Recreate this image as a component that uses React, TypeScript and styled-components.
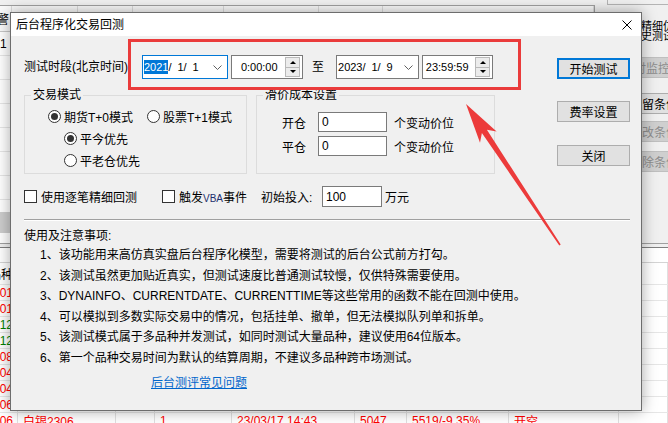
import React from 'react';
import styled, { createGlobalStyle } from 'styled-components';

const FONT = '"Liberation Sans", "Noto Sans CJK SC", sans-serif';

const GlobalStyle = createGlobalStyle`
  html, body {
    margin: 0;
    padding: 0;
    background: #f0f0f0;
  }
  body {
    font-family: ${FONT};
    font-size: 12px;
    color: #000;
  }
  * {
    box-sizing: border-box;
  }
`;

type Trade = {
  code: string;
  name?: string;
  qty?: string;
  time?: string;
  price?: string;
  last?: string;
  action?: string;
  color: string;
};

const RED = '#ff0000';
const GREEN = '#008000';

// rows that sit behind the dialog only show their code column
const trades: Trade[] = [
  { code: 'SH01', color: RED },
  { code: 'SC01', color: RED },
  { code: 'YC12', color: GREEN },
  { code: 'MC12', color: GREEN },
  { code: 'PA08', color: RED },
  { code: 'RU04', color: RED },
  { code: 'CU04', color: RED },
  { code: 'AG06', color: RED },
  { code: 'AG2306', name: '白银2306', qty: '1', time: '23/03/17 14:43', price: '5047', last: '5519/-9.35%', action: '开空', color: RED },
];

const notes = [
  '1、该功能用来高仿真实盘后台程序化模型，需要将测试的后台公式前方打勾。',
  '2、该测试虽然更加贴近真实，但测试速度比普通测试较慢，仅供特殊需要使用。',
  '3、DYNAINFO、CURRENTDATE、CURRENTTIME等这些常用的函数不能在回测中使用。',
  '4、可以模拟到多数实际交易中的情况，包括挂单、撤单，但无法模拟队列单和拆单。',
  '5、该测试模式属于多品种并发测试，如同时测试大量品种，建议使用64位版本。',
  '6、第一个品种交易时间为默认的结算周期，不建议多品种跨市场测试。',
];

const App: React.FC = () => {
  return (
    <>
      <GlobalStyle />
      <Screen>
        <Workspace>
          <TopSection>
            <TopTable>
              <TopRow $head>
                <TopCell $first $end>预警</TopCell>
                <TopCell />
                <TopCell />
                <TopCell />
                <TopCell />
                <TopCell />
                <TopCell />
              </TopRow>
              <TopBody>
                {Array.from({ length: 8 }).map((_, i) => (
                  <TopRow key={i}>
                    <TopCell $first>{i === 0 ? '1' : ''}</TopCell>
                    <TopCell />
                    <TopCell />
                    <TopCell />
                    <TopCell />
                    <TopCell />
                    <TopCell />
                  </TopRow>
                ))}
              </TopBody>
              <HScroll>
                <HThumb />
              </HScroll>
              <TopFooter />
            </TopTable>
            <SidePanel>
              <SideTopBox />
              <SideNote>逐笔精细仿真历史测试</SideNote>
              <SideButton $mt={16} disabled>
                实时监控(S)
              </SideButton>
              <SideButton $mt={15}>保留条件</SideButton>
              <SideButton $mt={7} disabled>
                修改条件
              </SideButton>
              <SideButton $mt={9} disabled>
                删除条件
              </SideButton>
            </SidePanel>
          </TopSection>
          <SplitBar />
          <BottomTable>
            <BottomStrip />
            <TradeRow $h={22}>
              <TradeCell $end>品种</TradeCell>
              <TradeCell />
              <TradeCell />
              <TradeCell />
              <TradeCell />
              <TradeCell />
              <TradeCell />
              <TradeCell />
              <TradeCell />
            </TradeRow>
            {trades.map((t, i) => (
              <TradeRow key={i} $h={16}>
                <TradeCell $end $color={t.color}>{t.code}</TradeCell>
                <TradeCell $color={t.color}>{t.name}</TradeCell>
                <TradeCell $color={t.color} />
                <TradeCell $color={t.color}>{t.qty}</TradeCell>
                <TradeCell $color={t.color}>{t.time}</TradeCell>
                <TradeCell $color={t.color}>{t.price}</TradeCell>
                <TradeCell $color={t.color}>{t.last}</TradeCell>
                <TradeCell $color={t.color}>{t.action}</TradeCell>
                <TradeCell />
              </TradeRow>
            ))}
          </BottomTable>
        </Workspace>

        <Dialog>
          <TitleBar>
            <Title>后台程序化交易回测</Title>
            <CloseButton>
              <svg width="10" height="10" viewBox="0 0 10 10">
                <path d="M0.5 0.5 L9.5 9.5 M9.5 0.5 L0.5 9.5" stroke="#000" strokeWidth="1" />
              </svg>
            </CloseButton>
          </TitleBar>
          <Body>
            <TopPart>
              <Main>
                <DateRow>
                  <RowLabel>测试时段(北京时间)</RowLabel>
                  <FieldBox $w={86} $focus>
                    <Selected>2021</Selected>/<DatePart>1</DatePart>/<DatePart>1</DatePart>
                    <Chevron width="9" height="5" viewBox="0 0 9 5">
                      <path d="M0.5 0.5 L4.5 4.5 L8.5 0.5" fill="none" stroke="#606060" strokeWidth="1" />
                    </Chevron>
                  </FieldBox>
                  <FieldBox $w={72}>
                    <HourPart>0</HourPart>:00:00
                    <Spinner>
                      <SpinHalf>
                        <Tri $up />
                      </SpinHalf>
                      <SpinHalf>
                        <Tri />
                      </SpinHalf>
                    </Spinner>
                  </FieldBox>
                  <ToLabel>至</ToLabel>
                  <FieldBox $w={83}>
                    2023/<DatePart>1</DatePart>/<DatePart>9</DatePart>
                    <Chevron width="9" height="5" viewBox="0 0 9 5">
                      <path d="M0.5 0.5 L4.5 4.5 L8.5 0.5" fill="none" stroke="#606060" strokeWidth="1" />
                    </Chevron>
                  </FieldBox>
                  <FieldBox $w={71}>
                    <HourPart>23</HourPart>:59:59
                    <Spinner>
                      <SpinHalf>
                        <Tri $up />
                      </SpinHalf>
                      <SpinHalf>
                        <Tri />
                      </SpinHalf>
                    </Spinner>
                  </FieldBox>
                </DateRow>

                <GroupRow>
                  <Group $w={223}>
                    <Legend>交易模式</Legend>
                    <GroupInner $pt={6} $pl={23}>
                      <RadioCol>
                        <RadioLine>
                          <RadioItem $w={99}>
                            <RadioDot $on />
                            期货T+0模式
                          </RadioItem>
                          <RadioItem>
                            <RadioDot />
                            股票T+1模式
                          </RadioItem>
                        </RadioLine>
                        <RadioLine $indent>
                          <RadioItem>
                            <RadioDot $on />
                            平今优先
                          </RadioItem>
                        </RadioLine>
                        <RadioLine $indent>
                          <RadioItem>
                            <RadioDot />
                            平老仓优先
                          </RadioItem>
                        </RadioLine>
                      </RadioCol>
                    </GroupInner>
                  </Group>
                  <Group $w={239}>
                    <Legend>滑价成本设置</Legend>
                    <GroupInner $pt={10} $pl={25}>
                      <CostCol>
                        <CostRow>
                          <CostLabel>开仓</CostLabel>
                          <InputBox $w={69} $h={20}>0</InputBox>
                          <span>个变动价位</span>
                        </CostRow>
                        <CostRow>
                          <CostLabel>平仓</CostLabel>
                          <InputBox $w={69} $h={20}>0</InputBox>
                          <span>个变动价位</span>
                        </CostRow>
                      </CostCol>
                    </GroupInner>
                  </Group>
                </GroupRow>

                <CheckRow>
                  <CheckItem $w={138}>
                    <CheckBox />
                    使用逐笔精细回测
                  </CheckItem>
                  <CheckItem $w={99}>
                    <CheckBox />
                    <span>
                      触发<Small>VBA</Small>事件
                    </span>
                  </CheckItem>
                  <CapitalLabel>初始投入:</CapitalLabel>
                  <InputBox $w={60} $h={21}>100</InputBox>
                  <Unit>万元</Unit>
                </CheckRow>
              </Main>

              <ButtonColumn>
                <DialogButton $primary>开始测试</DialogButton>
                <DialogButton>费率设置</DialogButton>
                <DialogButton $mt={1}>关闭</DialogButton>
              </ButtonColumn>
            </TopPart>

            <Separator />
            <NotesTitle>使用及注意事项:</NotesTitle>
            <NotesList>
              {notes.map((n) => (
                <li key={n}>{n}</li>
              ))}
            </NotesList>
            <HelpLink href="#">后台测评常见问题</HelpLink>
          </Body>
        </Dialog>

        <Highlight />
        <ArrowLayer viewBox="0 0 668 423">
          <polygon
            points="466,104 496.6,131.6 486.9,129.7 560.7,244.6 559.3,245.4 481.9,133.1 480,142.8"
            fill="#ec3b3b"
          />
        </ArrowLayer>
      </Screen>
    </>
  );
};

export default App;

/* ---------- background application ---------- */

const Screen = styled.div`
  position: relative;
  width: 668px;
  height: 423px;
  overflow: hidden;
  background: #f0f0f0;
  font-family: ${FONT};
  font-size: 12px;
`;

const Workspace = styled.div`
  display: flex;
  flex-direction: column;
  height: 100%;
`;

const TopSection = styled.div`
  display: flex;
  height: 243px;
  flex: none;
`;

const TopTable = styled.div`
  flex: 0 0 595px;
  margin-top: 5px;
  background: #fff;
  border-top: 1px solid #a0a0a0;
  border-right: 1px solid #a0a0a0;
  display: flex;
  flex-direction: column;
  overflow: hidden;
`;

const TopRow = styled.div<{ $head?: boolean }>`
  display: grid;
  grid-template-columns: 12px 66px 55px 91px 95px 64px 1fr;
  flex: none;
  height: ${(p) => (p.$head ? 26 : 24)}px;
  background: ${(p) => (p.$head ? '#fafafa' : '#fff')};
  border-bottom: 1px solid ${(p) => (p.$head ? '#c8c8c8' : '#e6e6e6')};
`;

const TopCell = styled.div<{ $first?: boolean; $end?: boolean }>`
  display: flex;
  align-items: center;
  justify-content: ${(p) => (p.$end ? 'flex-end' : 'flex-start')};
  padding: ${(p) => (p.$first ? '0 2px 0 0' : '0 4px')};
  border-right: 1px solid #dcdcdc;
  white-space: nowrap;
  overflow: hidden;
`;

const TopBody = styled.div`
  flex: 1;
  overflow: hidden;
`;

const HScroll = styled.div`
  flex: none;
  height: 21px;
  display: flex;
  background: #f0f0f0;
`;

const HThumb = styled.div`
  width: 240px;
  background: #cdcdcd;
`;

const TopFooter = styled.div`
  flex: none;
  height: 10px;
  background: #fff;
`;

const SidePanel = styled.div`
  flex: 1;
  display: flex;
  flex-direction: column;
  padding-left: 12px;
  overflow: hidden;
  background: #f0f0f0;
`;

const SideTopBox = styled.div`
  flex: none;
  width: 100px;
  height: 5px;
  border: 1px solid #b4b4b4;
  border-top: none;
`;

const SideNote = styled.div`
  flex: none;
  width: 60px;
  margin: 16px 0 0 12px;
  font-size: 11px;
  line-height: 10px;
`;

const SideButton = styled.button<{ $mt: number }>`
  flex: none;
  width: 94px;
  height: 21px;
  margin-top: ${(p) => p.$mt}px;
  padding: 0;
  font-family: ${FONT};
  font-size: 12px;
  white-space: nowrap;
  color: #000;
  background: #e1e1e1;
  border: 1px solid #adadad;

  &:disabled {
    color: #8d8d8d;
    background: #cfcfcf;
    border-color: #bfbfbf;
  }
`;

const SplitBar = styled.div`
  flex: none;
  height: 5px;
  background: #f0f0f0;
  border-top: 1px solid #a0a0a0;
  border-bottom: 1px solid #7f7f7f;
`;

const BottomTable = styled.div`
  flex: 1;
  display: flex;
  flex-direction: column;
  background: #fff;
`;

const BottomStrip = styled.div`
  flex: none;
  height: 15px;
  border-bottom: 1px solid #d4d4d4;
`;

const TradeRow = styled.div<{ $h: number }>`
  display: grid;
  grid-template-columns: 18px 98px 39px 77px 123px 52px 102px 110px 1fr;
  flex: none;
  height: ${(p) => p.$h}px;
  border-bottom: 1px solid #e6e6e6;
`;

const TradeCell = styled.div<{ $color?: string; $end?: boolean }>`
  display: flex;
  align-items: center;
  justify-content: ${(p) => (p.$end ? 'flex-end' : 'flex-start')};
  padding: ${(p) => (p.$end ? '0 4px 0 0' : '0 0 0 5px')};
  border-right: 1px solid #e0e0e0;
  color: ${(p) => p.$color || '#000'};
  white-space: nowrap;
  overflow: hidden;
`;

/* ---------- dialog ---------- */

const Dialog = styled.section`
  position: absolute;
  left: 10px;
  top: 12px;
  width: 632px;
  height: 399px;
  display: flex;
  flex-direction: column;
  background: #f0f0f0;
  border: 1px solid #6d6d6d;
  box-shadow: 0 0 14px rgba(0, 0, 0, 0.35);
`;

const TitleBar = styled.div`
  flex: none;
  height: 23px;
  display: flex;
  align-items: center;
  padding-left: 5px;
  background: #fff;
`;

const Title = styled.div`
  font-size: 12px;
  line-height: 14px;
`;

const CloseButton = styled.div`
  margin-left: auto;
  width: 28px;
  height: 23px;
  display: flex;
  align-items: center;
  justify-content: center;

  > svg {
    display: block;
  }
`;

const Body = styled.div`
  flex: 1;
  padding: 19px 11px 0 13px;
`;

const TopPart = styled.div`
  display: flex;
`;

const Main = styled.div`
  width: 471px;
`;

const DateRow = styled.div`
  display: flex;
  align-items: center;
  gap: 3px;
  height: 24px;
`;

const RowLabel = styled.div`
  width: 115px;
  line-height: 16px;
`;

const FieldBox = styled.div<{ $w: number; $focus?: boolean }>`
  width: ${(p) => p.$w}px;
  height: 24px;
  display: flex;
  align-items: center;
  padding-left: 1px;
  font-size: 11px;
  white-space: pre;
  background: #fff;
  border: 1px solid ${(p) => (p.$focus ? '#0078d7' : '#7a7a7a')};
`;

const Selected = styled.span`
  background: #0078d7;
  color: #fff;
  line-height: 14px;
`;

const DatePart = styled.span`
  display: inline-block;
  width: 12px;
  text-align: right;
`;

const HourPart = styled.span`
  display: inline-block;
  width: 14px;
  text-align: right;
`;

const Chevron = styled.svg`
  display: block;
  margin-left: auto;
  margin-right: 5px;
`;

const Spinner = styled.div`
  margin-left: auto;
  margin-right: 2px;
  width: 15px;
  height: 20px;
  display: flex;
  flex-direction: column;
`;

const SpinHalf = styled.div`
  flex: 1;
  display: flex;
  align-items: center;
  justify-content: center;
  background: #ececec;
  border: 1px solid #b9b9b9;

  & + & {
    border-top: none;
  }
`;

const Tri = styled.span<{ $up?: boolean }>`
  width: 0;
  height: 0;
  border-left: 3px solid transparent;
  border-right: 3px solid transparent;
  ${(p) => (p.$up ? 'border-bottom: 3px solid #000;' : 'border-top: 3px solid #000;')}
`;

const ToLabel = styled.div`
  margin: 0 9px 0 6px;
  line-height: 16px;
`;

const GroupRow = styled.div`
  display: flex;
  gap: 9px;
  margin-top: 9px;
`;

const Group = styled.fieldset<{ $w: number }>`
  margin: 0;
  padding: 0;
  min-width: 0;
  width: ${(p) => p.$w}px;
  height: 86px;
  border: 1px solid #dcdcdc;
`;

const Legend = styled.legend`
  margin-left: 6px;
  padding: 0 2px;
  font-size: 12px;
  line-height: 14px;
`;

const GroupInner = styled.div<{ $pt: number; $pl: number }>`
  padding: ${(p) => p.$pt}px 0 0 ${(p) => p.$pl}px;
`;

const RadioCol = styled.div`
  display: flex;
  flex-direction: column;
  gap: 6px;
`;

const RadioLine = styled.div<{ $indent?: boolean }>`
  display: flex;
  height: 16px;
  margin-left: ${(p) => (p.$indent ? 16 : 0)}px;
`;

const RadioItem = styled.label<{ $w?: number }>`
  display: flex;
  align-items: center;
  gap: 3px;
  width: ${(p) => (p.$w ? `${p.$w}px` : 'auto')};
  white-space: nowrap;
`;

const RadioDot = styled.span<{ $on?: boolean }>`
  position: relative;
  flex: none;
  width: 13px;
  height: 13px;
  border-radius: 50%;
  border: 1px solid #333;
  background: #fff;

  &::after {
    content: '';
    display: ${(p) => (p.$on ? 'block' : 'none')};
    position: absolute;
    left: 2px;
    top: 2px;
    width: 7px;
    height: 7px;
    border-radius: 50%;
    background: #333;
  }
`;

const CostCol = styled.div`
  display: flex;
  flex-direction: column;
  gap: 4px;
`;

const CostRow = styled.div`
  display: flex;
  align-items: center;
  height: 20px;
`;

const CostLabel = styled.div`
  width: 36px;
`;

const InputBox = styled.div<{ $w: number; $h: number }>`
  flex: none;
  width: ${(p) => p.$w}px;
  height: ${(p) => p.$h}px;
  display: flex;
  align-items: center;
  padding-left: 3px;
  margin-right: 7px;
  background: #fff;
  border: 1px solid #7a7a7a;
`;

const CheckRow = styled.div`
  display: flex;
  align-items: center;
  height: 21px;
  margin-top: 12px;
  white-space: nowrap;
`;

const CheckItem = styled.label<{ $w: number }>`
  display: flex;
  align-items: center;
  gap: 4px;
  width: ${(p) => p.$w}px;
`;

const CheckBox = styled.span`
  flex: none;
  width: 13px;
  height: 13px;
  border: 1px solid #333;
  background: #fff;
`;

const Small = styled.span`
  font-size: 10px;
  color: #1d2f6e;
`;

const CapitalLabel = styled.div`
  width: 61px;
`;

const Unit = styled.span`
  margin-left: -4px;
`;

const ButtonColumn = styled.div`
  margin-left: auto;
  padding-top: 3px;
  width: 73px;
  display: flex;
  flex-direction: column;
  gap: 22px;
`;

const DialogButton = styled.button<{ $primary?: boolean; $mt?: number }>`
  width: 73px;
  height: 21px;
  padding: 0;
  margin-top: ${(p) => p.$mt || 0}px;
  font-family: ${FONT};
  font-size: 12px;
  color: #000;
  background: #e1e1e1;
  border: ${(p) => (p.$primary ? '2px solid #0078d7' : '1px solid #adadad')};
`;

const Separator = styled.div`
  margin-top: 12px;
  border-top: 1px solid #a0a0a0;
  border-bottom: 1px solid #fff;
`;

const NotesTitle = styled.div`
  margin-top: 6px;
  line-height: 18px;
`;

const NotesList = styled.ol`
  list-style: none;
  margin: 0;
  padding: 0 0 0 16px;

  > li {
    line-height: 20.6px;
    white-space: nowrap;
  }
`;

const HelpLink = styled.a`
  display: inline-block;
  margin: 5px 0 0 127px;
  line-height: 18px;
  color: #0066cc;
  text-decoration: underline;
`;

/* ---------- annotations ---------- */

const Highlight = styled.div`
  position: absolute;
  left: 128px;
  top: 39px;
  width: 393px;
  height: 51px;
  border: 3px solid #ea3b3b;
  pointer-events: none;
`;

const ArrowLayer = styled.svg`
  position: absolute;
  left: 0;
  top: 0;
  width: 668px;
  height: 423px;
  pointer-events: none;
`;
